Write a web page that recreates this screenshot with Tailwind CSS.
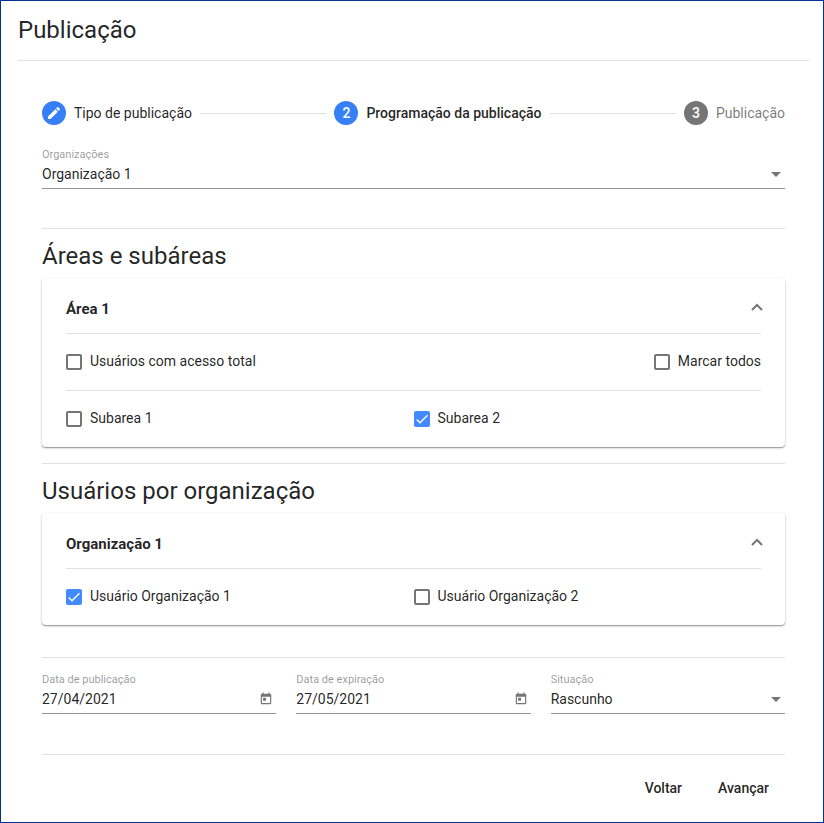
<!DOCTYPE html>
<html lang="pt-BR">
<head>
    <meta charset="UTF-8">
    <meta name="viewport" content="width=device-width, initial-scale=1.0">
    <title>Publicação</title>
    <script src="https://cdn.jsdelivr.net/npm/@tailwindcss/browser@4"></script>
</head>
<body class="bg-white font-[Roboto,sans-serif] text-sm text-black/87">
    <div class="min-h-screen border border-[#003399] pl-[17px] pr-[14px]">
        <h1 class="pt-3 pb-3 text-2xl leading-[35px]">Publicação</h1>
        <hr class="border-black/12">

        <main class="px-6 pt-10">
            <!-- Stepper -->
            <ol class="flex items-center gap-2">
                <li class="flex items-center gap-2">
                    <span class="flex size-6 items-center justify-center rounded-full bg-[#377ff7]">
                        <svg class="size-4" viewBox="0 0 24 24" fill="white"><path d="M3 17.25V21h3.75L17.81 9.94l-3.75-3.75L3 17.25zM20.71 7.04a1 1 0 0 0 0-1.41l-2.34-2.34a1 1 0 0 0-1.41 0l-1.83 1.83 3.75 3.75 1.83-1.83z"/></svg>
                    </span>
                    <span>Tipo de publicação</span>
                </li>
                <li class="h-px flex-1 bg-black/12" aria-hidden="true"></li>
                <li class="flex items-center gap-2" aria-current="step">
                    <span class="flex size-6 items-center justify-center rounded-full bg-[#377ff7] font-medium text-white">2</span>
                    <span class="font-medium">Programação da publicação</span>
                </li>
                <li class="h-px flex-1 bg-black/12" aria-hidden="true"></li>
                <li class="flex items-center gap-2">
                    <span class="flex size-6 items-center justify-center rounded-full bg-[#757575] font-medium text-white">3</span>
                    <span class="text-black/54">Publicação</span>
                </li>
            </ol>

            <!-- Organization -->
            <div class="mt-[23px] border-b border-black/42">
                <label for="organizacoes" class="block text-[11px] leading-[14px] text-black/42">Organizações</label>
                <div class="relative">
                    <select id="organizacoes" class="block h-[26px] w-full appearance-none bg-transparent pb-[2px]">
                        <option>Organização 1</option>
                    </select>
                    <svg class="pointer-events-none absolute top-[10px] right-1 h-[5px] w-[10px]" viewBox="0 0 10 5" fill="#757575"><path d="M0 0h10L5 5z"/></svg>
                </div>
            </div>

            <!-- Areas -->
            <hr class="mt-[39px] border-black/12">
            <h2 class="mt-[11px] text-2xl leading-8">Áreas e subáreas</h2>
            <section class="mt-[6px] rounded bg-white px-6 shadow-[0_1px_1px_rgba(0,0,0,0.3),0_1px_3px_rgba(0,0,0,0.2)]">
                <div class="flex h-[55px] items-center justify-between pt-2">
                    <h3 class="text-[15px] font-bold">Área 1</h3>
                    <button type="button" aria-label="Recolher Área 1" class="-mr-1 pb-[6px]">
                        <svg class="size-4 text-[#757575]" viewBox="0 0 16 16" fill="none" stroke="currentColor" stroke-width="2"><path d="M3 11l5-5 5 5"/></svg>
                    </button>
                </div>
                <hr class="border-black/12">
                <div class="flex h-14 items-center justify-between">
                    <label class="flex items-center gap-2">
                        <input type="checkbox" class="size-4 appearance-none rounded-xs border-2 border-[#757575]">
                        <span class="pb-[2px]">Usuários com acesso total</span>
                    </label>
                    <label class="flex items-center gap-2">
                        <input type="checkbox" class="size-4 appearance-none rounded-xs border-2 border-[#757575]">
                        <span class="pb-[2px]">Marcar todos</span>
                    </label>
                </div>
                <hr class="border-black/12">
                <div class="grid h-14 grid-cols-2 items-center">
                    <label class="flex items-center gap-2">
                        <input type="checkbox" class="size-4 appearance-none rounded-xs border-2 border-[#757575]">
                        <span class="pb-[2px]">Subarea 1</span>
                    </label>
                    <label class="relative flex items-center gap-2">
                        <input type="checkbox" checked class="peer size-4 appearance-none rounded-xs border-2 border-[#757575] checked:border-[#448aff] checked:bg-[#448aff]">
                        <svg class="pointer-events-none absolute left-0 hidden size-4 peer-checked:block" viewBox="0 0 24 24" fill="none" stroke="white" stroke-width="2"><path d="M4.1 12.7 9 17.6 20.3 6.3"/></svg>
                        <span class="pb-[2px]">Subarea 2</span>
                    </label>
                </div>
            </section>

            <!-- Users -->
            <hr class="mt-4 border-black/12">
            <h2 class="mt-[11px] text-2xl leading-8">Usuários por organização</h2>
            <section class="mt-[6px] rounded bg-white px-6 shadow-[0_1px_1px_rgba(0,0,0,0.3),0_1px_3px_rgba(0,0,0,0.2)]">
                <div class="flex h-[55px] items-center justify-between pt-2">
                    <h3 class="text-[15px] font-bold">Organização 1</h3>
                    <button type="button" aria-label="Recolher Organização 1" class="-mr-1 pb-[6px]">
                        <svg class="size-4 text-[#757575]" viewBox="0 0 16 16" fill="none" stroke="currentColor" stroke-width="2"><path d="M3 11l5-5 5 5"/></svg>
                    </button>
                </div>
                <hr class="border-black/12">
                <div class="grid h-14 grid-cols-2 items-center">
                    <label class="relative flex items-center gap-2">
                        <input type="checkbox" checked class="peer size-4 appearance-none rounded-xs border-2 border-[#757575] checked:border-[#448aff] checked:bg-[#448aff]">
                        <svg class="pointer-events-none absolute left-0 hidden size-4 peer-checked:block" viewBox="0 0 24 24" fill="none" stroke="white" stroke-width="2"><path d="M4.1 12.7 9 17.6 20.3 6.3"/></svg>
                        <span class="pb-[2px]">Usuário Organização 1</span>
                    </label>
                    <label class="flex items-center gap-2">
                        <input type="checkbox" class="size-4 appearance-none rounded-xs border-2 border-[#757575]">
                        <span class="pb-[2px]">Usuário Organização 2</span>
                    </label>
                </div>
            </section>

            <!-- Dates and status -->
            <hr class="mt-8 border-black/12">
            <div class="mt-[15px] grid grid-cols-3 gap-5">
                <div class="border-b border-black/42">
                    <label for="data-publicacao" class="block text-[11px] leading-[14px] text-black/42">Data de publicação</label>
                    <div class="flex h-[26px] items-center pb-[2px]">
                        <input id="data-publicacao" type="text" value="27/04/2021" class="w-full min-w-0 flex-1">
                        <button type="button" aria-label="Abrir calendário" class="mr-[3px]">
                            <svg class="size-[14px]" viewBox="0 0 24 24" fill="#757575"><path d="M19 3h-1V1h-2v2H8V1H6v2H5a2 2 0 0 0-2 2v14a2 2 0 0 0 2 2h14a2 2 0 0 0 2-2V5a2 2 0 0 0-2-2zm0 16H5V8h14v11zM7 10h5v5H7z"/></svg>
                        </button>
                    </div>
                </div>
                <div class="border-b border-black/42">
                    <label for="data-expiracao" class="block text-[11px] leading-[14px] text-black/42">Data de expiração</label>
                    <div class="flex h-[26px] items-center pb-[2px]">
                        <input id="data-expiracao" type="text" value="27/05/2021" class="w-full min-w-0 flex-1">
                        <button type="button" aria-label="Abrir calendário" class="mr-[3px]">
                            <svg class="size-[14px]" viewBox="0 0 24 24" fill="#757575"><path d="M19 3h-1V1h-2v2H8V1H6v2H5a2 2 0 0 0-2 2v14a2 2 0 0 0 2 2h14a2 2 0 0 0 2-2V5a2 2 0 0 0-2-2zm0 16H5V8h14v11zM7 10h5v5H7z"/></svg>
                        </button>
                    </div>
                </div>
                <div class="border-b border-black/42">
                    <label for="situacao" class="block text-[11px] leading-[14px] text-black/42">Situação</label>
                    <div class="relative">
                        <select id="situacao" class="block h-[26px] w-full appearance-none bg-transparent pb-[2px]">
                            <option>Rascunho</option>
                        </select>
                        <svg class="pointer-events-none absolute top-[10px] right-1 h-[5px] w-[10px]" viewBox="0 0 10 5" fill="#757575"><path d="M0 0h10L5 5z"/></svg>
                    </div>
                </div>
            </div>

            <!-- Actions -->
            <hr class="mt-10 border-black/12">
            <div class="flex justify-end gap-1 pt-[15px] pb-4">
                <button type="button" class="h-9 rounded px-4 font-medium hover:bg-black/4">Voltar</button>
                <button type="button" class="h-9 rounded px-4 font-medium hover:bg-black/4">Avançar</button>
            </div>
        </main>
    </div>
</body>
</html>
